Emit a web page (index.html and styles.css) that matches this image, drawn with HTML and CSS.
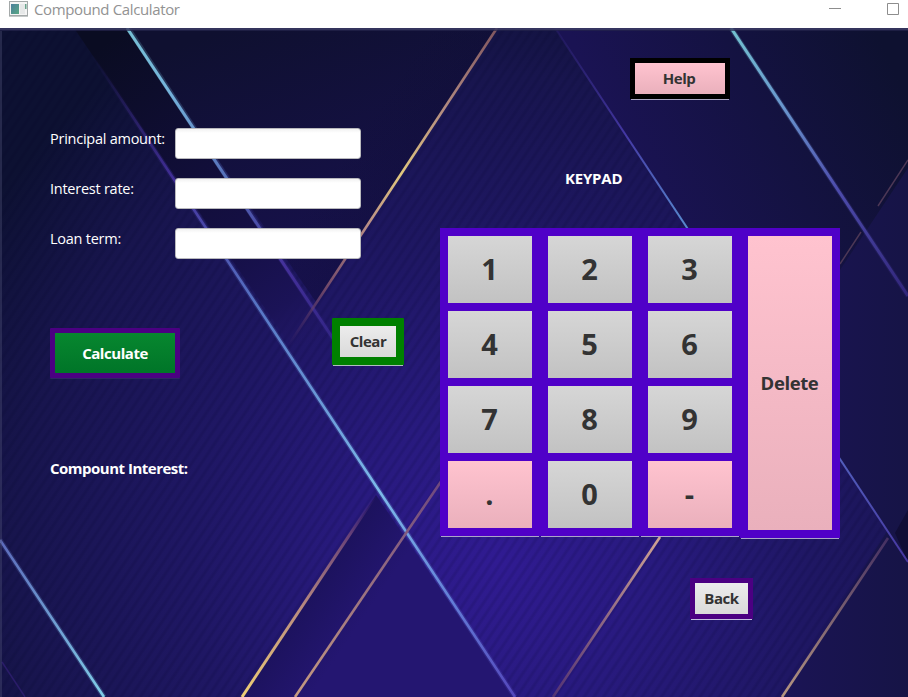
FILE: index.html
```html
<!DOCTYPE html>
<html lang="en">
<head>
<meta charset="utf-8">
<title>Compound Calculator</title>
<link rel="stylesheet" href="styles.css">
</head>
<body>
<div class="window">
  <header class="titlebar">
    <svg class="app-icon" width="20" height="16" viewBox="0 0 20 16">
      <defs><linearGradient id="ic" x1="0" y1="0" x2="1" y2="1"><stop offset="0" stop-color="#4a7f9c"/><stop offset="1" stop-color="#5aa884"/></linearGradient></defs>
      <rect x=".5" y=".5" width="18" height="14" fill="#f4f4f4" stroke="#a4a9a9"/>
      <rect x="2" y="3" width="8" height="10" fill="url(#ic)"/>
      <rect x="11" y="3" width="5" height="10" fill="#e6e8e8"/>
      <rect x="16" y="3" width="1.5" height="5" fill="#69a48c"/>
      <path d="M0 15.5H19" stroke="#c4c8c8"/>
    </svg>
    <span class="title">Compound Calculator</span>
    <svg class="controls" width="72" height="14" viewBox="0 0 72 14" fill="none" stroke="#8d8d8d"><path d="M0 5.500H12M58.500 .500H69.500V11.500H58.500Z"/></svg>
  </header>
  <main class="scene">
    <svg class="backdrop" viewBox="0 28 908 669" preserveAspectRatio="none">
      <defs>
        <radialGradient id="glow" gradientUnits="userSpaceOnUse" cx="500" cy="560" r="620">
          <stop offset="0" stop-color="#301b92"/><stop offset=".25" stop-color="#281a7e"/><stop offset=".5" stop-color="#1f1764"/><stop offset=".78" stop-color="#18154e"/><stop offset="1" stop-color="#0d1132"/>
        </radialGradient>
        <linearGradient id="band" gradientUnits="userSpaceOnUse" x1="110" y1="40" x2="330" y2="340">
          <stop offset="0" stop-color="#0a0c22"/><stop offset=".6" stop-color="#140f42"/><stop offset=".85" stop-color="#1b1357"/><stop offset="1" stop-color="#231768" stop-opacity="0"/>
        </linearGradient>
        <linearGradient id="tri" gradientUnits="userSpaceOnUse" x1="230" y1="28" x2="320" y2="300">
          <stop offset="0" stop-color="#0f1030"/><stop offset="1" stop-color="#181150"/>
        </linearGradient>
        <linearGradient id="right" gradientUnits="userSpaceOnUse" x1="640" y1="180" x2="890" y2="60">
          <stop offset="0" stop-color="#1a1353"/><stop offset="1" stop-color="#0e1130"/>
        </linearGradient>
        <linearGradient id="far" gradientUnits="userSpaceOnUse" x1="750" y1="0" x2="908" y2="0">
          <stop offset="0" stop-color="#1c1459"/><stop offset="1" stop-color="#161446"/>
        </linearGradient>
        <linearGradient id="shadeI" gradientUnits="userSpaceOnUse" x1="330" y1="560" x2="380" y2="594">
          <stop offset="0" stop-color="#1c125d"/><stop offset="1" stop-color="#241671"/>
        </linearGradient>
        <linearGradient id="shadeC" gradientUnits="userSpaceOnUse" x1="350" y1="140" x2="436" y2="197">
          <stop offset="0" stop-color="#0e0d33" stop-opacity="0"/><stop offset="1" stop-color="#0e0d33" stop-opacity=".35"/>
        </linearGradient>
        <pattern id="stripes" width="8" height="8" patternUnits="userSpaceOnUse" patternTransform="rotate(34)">
          <rect width="4" height="8" fill="#080526" opacity=".06"/><rect x="1" width="2" height="8" fill="#080526" opacity=".06"/>
        </pattern>
        <linearGradient id="gA" gradientUnits="userSpaceOnUse" x1="128" y1="28" x2="338" y2="346"><stop offset="0" stop-color="#76c0d4"/><stop offset=".2" stop-color="#75b3db"/><stop offset=".5" stop-color="#5268b5"/><stop offset=".75" stop-color="#44309a"/><stop offset="1" stop-color="#40309d" stop-opacity=".5"/></linearGradient>
        <linearGradient id="gB" gradientUnits="userSpaceOnUse" x1="92" y1="55" x2="515" y2="697"><stop offset="0" stop-color="#32236c" stop-opacity="0"/><stop offset=".2" stop-color="#43309b"/><stop offset=".4" stop-color="#5878c6"/><stop offset=".68" stop-color="#7dbbea"/><stop offset=".85" stop-color="#637ed7"/><stop offset="1" stop-color="#5446bb"/></linearGradient>
        <linearGradient id="gC" gradientUnits="userSpaceOnUse" x1="497" y1="28" x2="288" y2="346"><stop offset="0" stop-color="#80565f"/><stop offset=".25" stop-color="#b18a80"/><stop offset=".46" stop-color="#e1c77e"/><stop offset=".62" stop-color="#b98d85"/><stop offset=".82" stop-color="#704768"/><stop offset="1" stop-color="#50306c" stop-opacity="0"/></linearGradient>
        <linearGradient id="gD" gradientUnits="userSpaceOnUse" x1="555" y1="28" x2="908" y2="562"><stop offset="0" stop-color="#32247d" stop-opacity=".3"/><stop offset=".2" stop-color="#4438a4"/><stop offset=".36" stop-color="#5785cc"/><stop offset=".8" stop-color="#5260bd"/><stop offset="1" stop-color="#4636a0"/></linearGradient>
        <linearGradient id="gE" gradientUnits="userSpaceOnUse" x1="731" y1="28" x2="908" y2="296"><stop offset="0" stop-color="#73c2d0"/><stop offset=".3" stop-color="#6995cd"/><stop offset=".6" stop-color="#4d4cac"/><stop offset="1" stop-color="#31257a"/></linearGradient>
        <linearGradient id="gG" gradientUnits="userSpaceOnUse" x1="0" y1="540" x2="104" y2="697"><stop offset="0" stop-color="#5b69ba"/><stop offset="1" stop-color="#80cde8"/></linearGradient>
        <linearGradient id="gI" gradientUnits="userSpaceOnUse" x1="242" y1="697" x2="376" y2="495"><stop offset="0" stop-color="#efcf75"/><stop offset=".45" stop-color="#b7897f"/><stop offset=".8" stop-color="#694277"/><stop offset="1" stop-color="#4a2b80" stop-opacity="0"/></linearGradient>
        <linearGradient id="gJ" gradientUnits="userSpaceOnUse" x1="295" y1="697" x2="442" y2="480"><stop offset="0" stop-color="#c69b80"/><stop offset="1" stop-color="#6d477f"/></linearGradient>
        <linearGradient id="gK" gradientUnits="userSpaceOnUse" x1="660" y1="537" x2="553" y2="697"><stop offset="0" stop-color="#d0a493"/><stop offset="1" stop-color="#523173"/></linearGradient>
        <linearGradient id="gL" gradientUnits="userSpaceOnUse" x1="888" y1="538" x2="782" y2="697"><stop offset="0" stop-color="#442f62"/><stop offset="1" stop-color="#b69680"/></linearGradient>
      </defs>
      <rect y="28" width="908" height="669" fill="url(#glow)"/>
      <rect y="28" width="908" height="669" fill="url(#stripes)"/>
      <path d="M74 28H128L335 341 290 345Z" fill="url(#band)"/>
      <path d="M128 28H497L316 302Z" fill="url(#tri)"/>
      <path d="M300 28H497L316 302 210 152Z" fill="url(#shadeC)"/>
      <path d="M555 28H908V562L840 459Z" fill="url(#right)"/>
      <path d="M840 270L908 168V562L840 459Z" fill="url(#far)"/>
      <path d="M888 530L908 562V697H782Z" fill="url(#far)"/>
      <path d="M908 510V562L895 533Z" fill="#100d35"/>
      <path d="M242 697L376 495 515 697Z" fill="url(#shadeI)"/>
      <g fill="none" stroke-width="5" opacity=".22">
        <path d="M128 28L338 346" stroke="url(#gA)"/><path d="M92 55L515 697" stroke="url(#gB)"/><path d="M731 28L908 296" stroke="url(#gE)"/><path d="M0 540L104 697" stroke="url(#gG)"/>
      </g>
      <g fill="none" stroke-width="2.600">
        <path d="M92 55L515 697" stroke="url(#gB)"/>
        <path d="M127 28L338 346" stroke="url(#gA)" stroke-width="3"/>
        <path d="M497 28L288 346" stroke="url(#gC)"/>
        <path d="M555 28L908 562" stroke="url(#gD)" stroke-width="2"/>
        <path d="M731 28L908 296" stroke="url(#gE)" stroke-width="3"/>
        <path d="M908 160L878 206M861 232L840 264" stroke="#4c3755" stroke-width="1.500"/>
        <path d="M0 540L104 697" stroke="url(#gG)"/>
        <path d="M2 662L25 697" stroke="#2a1c69" stroke-width="1.500"/>
        <path d="M242 697L376 495" stroke="url(#gI)" stroke-width="3"/>
        <path d="M295 697L442 480" stroke="url(#gJ)"/>
        <path d="M660 537L553 697" stroke="url(#gK)"/>
        <path d="M888 538L782 697" stroke="url(#gL)"/>
      </g>
      <path d="M0 29H908" stroke="#3b3b64" stroke-width="2" opacity=".85"/>
      <path d="M0 30.500H908" stroke="#24244c" opacity=".7"/>
      <path d="M1 31V697" stroke="#55587c" stroke-width="2" opacity=".35"/>
    </svg>
    <section class="form">
      <div class="row"><label for="p">Principal amount:</label><input id="p" type="text"></div>
      <div class="row"><label for="i">Interest rate:</label><input id="i" type="text"></div>
      <div class="row"><label for="l">Loan term:</label><input id="l" type="text"></div>
      <div class="actions">
        <button class="btn calculate">Calculate</button>
        <button class="btn clear">Clear</button>
      </div>
      <p class="result">Compount Interest:</p>
    </section>
    <section class="side">
      <button class="btn help">Help</button>
      <h2 class="heading">KEYPAD</h2>
      <div class="keypad">
        <div class="keys">
          <button class="key">1</button><button class="key">2</button><button class="key">3</button>
          <button class="key">4</button><button class="key">5</button><button class="key">6</button>
          <button class="key">7</button><button class="key">8</button><button class="key">9</button>
          <button class="key last pink">.</button><button class="key last">0</button><button class="key last pink">-</button>
        </div>
        <button class="key last pink delete">Delete</button>
      </div>
      <button class="btn back">Back</button>
    </section>
  </main>
</div>
</body>
</html>
```
FILE: styles.css
```css
* { box-sizing: border-box; }
body { margin: 0; overflow: hidden; font-family: "Open Sans", "Noto Sans", sans-serif; font-size: 14.5px; }
.window { width: 908px; height: 697px; display: flex; flex-direction: column; background: #fff; }
.titlebar { height: 28px; display: flex; align-items: flex-start; padding: 1px 7px 0 9px; color: #929292; }
.app-icon { flex: none; }
.title { margin: -1px 0 0 5px; font-size: 15px; line-height: 18px; letter-spacing: -.37px; white-space: nowrap; }
.controls { margin: 2px 0 0 auto; }
.scene { position: relative; height: 669px; display: flex; padding-left: 50px; overflow: hidden; }
.backdrop { position: absolute; inset: 0; width: 908px; height: 669px; z-index: 0; }
.form, .side { position: relative; z-index: 1; }
.form { width: 390px; padding-top: 100px; color: #fff; }
.row { display: flex; height: 50px; }
.row label { width: 125px; line-height: 22px; white-space: nowrap; letter-spacing: -.25px; }
.row input { width: 186px; height: 31px; padding: 0 8px; border: 1px solid #b9b9bd; border-radius: 3px; background: linear-gradient(#f2f2f2, #fff 4px); font: inherit; outline: 0; }
.actions { display: flex; justify-content: space-between; align-items: flex-start; width: 354px; margin-top: 40px; }
.btn, .key { display: flex; align-items: center; justify-content: center; margin: 0; padding: 0; border-radius: 0; font-family: inherit; font-weight: 700; color: #333; }
.btn { padding-bottom: 2px; font-size: 15px; letter-spacing: -.45px; }
.calculate { width: 130px; height: 50px; margin-top: 10px; padding-bottom: 0; border: 5px solid #4b0082; border-radius: 1px; background: linear-gradient(#07872f, #007528); color: #fff; box-shadow: 0 1px #2d2663; }
.clear { width: 72px; height: 47px; border: 8px solid #008000; border-radius: 1px; background: linear-gradient(#ececec, #dadada); box-shadow: 0 2px 0 -1px #b0bdc0; }
.result { margin: 79px 0 0; font-size: 15px; line-height: 22px; font-weight: 700; letter-spacing: -.5px; white-space: nowrap; }
.side { width: 400px; padding-top: 30px; }
.help { width: 100px; height: 41px; margin-left: 190px; padding-right: 2px; border: 5px solid #000; background: linear-gradient(#ffc3cf, #eab0bc); box-shadow: 0 2px 0 -1px #aaa5c2; }
.heading { margin: 68px 0 0 125px; font-size: 15px; line-height: 22px; color: #fff; letter-spacing: -.2px; }
.keypad { display: flex; align-items: flex-start; margin-top: 39px; }
.keys { display: grid; grid-template-columns: repeat(3, 100px); }
.key { width: 100px; height: 75px; padding: 0 1px 2px 0; border: 8px solid #5000c8; border-bottom: 0; background: linear-gradient(#d6d6d6, #c2c2c2); font-size: 29px; }
.last { height: 83px; border-bottom: 8px solid #5000c8; box-shadow: 0 2px 0 -1px #aaa5c8; }
.pink { background: linear-gradient(#ffc3cf, #eab0bc); }
.delete { height: 310px; padding-bottom: 2px; font-size: 18.500px; letter-spacing: -.4px; }
.back { width: 63px; height: 41px; margin: 40px 0 0 250px; border: 5px solid #4b0082; background: linear-gradient(#ececec, #dadada); box-shadow: 0 2px 0 -1px #c3bfe0; }
```
